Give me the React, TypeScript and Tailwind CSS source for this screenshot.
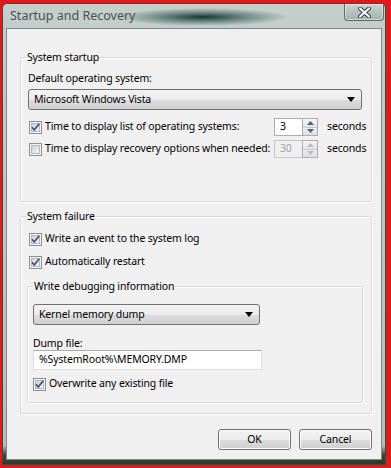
import React from "react";

const font = "font-['Noto_Sans','Open_Sans',sans-serif]";

const CheckBox = ({ checked }: { checked: boolean }) => (
  <svg width="13" height="13" viewBox="0 0 13 13" className="shrink-0">
    <defs>
      <linearGradient id="cbInner" x1="0" y1="0" x2="1" y2="1">
        <stop offset="0" stopColor="#cbcfd5" />
        <stop offset="1" stopColor="#f6f6f6" />
      </linearGradient>
    </defs>
    <rect x="0.5" y="0.5" width="12" height="12" fill="#f4f4f4" stroke="#8e8f8f" />
    <rect x="2.5" y="2.5" width="8" height="8" fill="url(#cbInner)" stroke="#b4b9c0" />
    {checked && (
      <path d="M3 6.2 L5.3 9 L10.2 2.8" fill="none" stroke="#3c4f85" strokeWidth="1.7" />
    )}
  </svg>
);

const Select = ({ value, className }: { value: string; className: string }) => (
  <div
    className={`${className} h-[21px] flex items-center justify-between pl-[5px] pr-[6px] rounded-[3px] border border-[#707070] bg-[linear-gradient(to_bottom,#f2f2f2_0%,#ebebeb_50%,#dddddd_51%,#cfcfcf_100%)]`}
  >
    <span>{value}</span>
    <svg width="8" height="5" viewBox="0 0 8 5">
      <path d="M0 0 H8 L4 5 Z" fill="#000" />
    </svg>
  </div>
);

const Spin = ({ value, disabled }: { value: string; disabled?: boolean }) => {
  const arrow = disabled ? "#b8bcc2" : "#4d6185";
  return (
    <div className="flex h-[18px] shrink-0">
      <div
        className={`w-[28px] h-full border border-r-0 flex items-center pl-[5px] ${
          disabled ? "bg-[#f0f0f0] text-[#a0a0a0] border-[#c4c6ca]" : "bg-white text-black border-[#abadb3]"
        }`}
      >
        {value}
      </div>
      <div className="w-[16px] h-full flex flex-col border border-[#abadb3] bg-[#e8eaec]">
        <div className="flex-1 flex items-center justify-center border-b border-[#c5c8cc] bg-[linear-gradient(to_bottom,#f4f5f6,#e2e4e7)]">
          <svg width="7" height="4" viewBox="0 0 7 4">
            <path d="M0 4 L3.5 0 L7 4 Z" fill={arrow} />
          </svg>
        </div>
        <div className="flex-1 flex items-center justify-center bg-[linear-gradient(to_bottom,#eceef0,#dcdfe2)]">
          <svg width="7" height="4" viewBox="0 0 7 4">
            <path d="M0 0 L7 0 L3.5 4 Z" fill={arrow} />
          </svg>
        </div>
      </div>
    </div>
  );
};

const Group = ({
  label,
  className,
  children,
}: {
  label: string;
  className: string;
  children: React.ReactNode;
}) => (
  <div
    className={`relative border border-[#d5d9dc] rounded-[2px] shadow-[1px_1px_0_#ffffff,inset_1px_1px_0_#ffffff] ${className}`}
  >
    <span className="absolute left-[5px] top-[-8px] px-[1px] bg-[#f0f0f0] leading-[15px]">{label}</span>
    {children}
  </div>
);

const Button = ({ label }: { label: string }) => (
  <button className="w-[73px] h-[21px] rounded-[3px] border border-[#707070] bg-[linear-gradient(to_bottom,#f2f2f2_0%,#ebebeb_50%,#dddddd_51%,#cfcfcf_100%)] shadow-[inset_0_0_0_1px_#fcfcfc] text-black">
    {label}
  </button>
);

export default function App() {
  return (
    <div className={`w-[391px] h-[468px] bg-[#e3181b] pl-[2px] pt-[3px] pr-[5px] pb-[3px] ${font} text-[10.5px] tracking-[-0.15px] text-black`}>
      <div className="w-full h-full flex flex-col border border-[#3e4a47] rounded-t-[5px] bg-[linear-gradient(to_bottom,#c4cecb_0%,#b2c0bc_96%,#3a4936_98%,#2d3a2a_100%)] px-[3px] pb-[4px]">
        <div className="h-[24px] flex justify-between items-start bg-[radial-gradient(ellipse_85px_9px_at_200px_13px,#123a31_0%,rgba(30,70,60,0.5)_50%,transparent_100%)] -mx-[3px] pl-[7px] pr-[1px]">
          <span className="leading-[24px] text-[12.5px] tracking-normal text-[#4a504f]">Startup and Recovery</span>
          <div className="w-[40px] h-[17px] rounded-b-[4px] border border-t-0 border-[#5d6b68] bg-[linear-gradient(to_bottom,#c9d3d1,#a3b2ae)] flex items-center justify-center shadow-[inset_0_0_0_1px_rgba(255,255,255,0.45)]">
            <svg width="13" height="11" viewBox="0 0 13 11">
              <path d="M2 1.5 L11 9.5 M11 1.5 L2 9.5" stroke="#2e3a38" strokeWidth="4" strokeLinecap="round" />
              <path d="M2 1.5 L11 9.5 M11 1.5 L2 9.5" stroke="#ffffff" strokeWidth="2.2" strokeLinecap="round" />
            </svg>
          </div>
        </div>
        <div className="flex-1 flex flex-col border border-[#7c8b88] bg-[#f0f0f0] pl-[13px] pr-[9px] pt-[28px]">
          <Group label="System startup" className="h-[145px] pl-[7px] pr-[9px] pt-[13px]">
            <div className="leading-[15px]">Default operating system:</div>
            <Select value="Microsoft Windows Vista" className="mt-[3px]" />
            <div className="mt-[8px] h-[18px] flex items-center">
              <span className="ml-[1px]"><CheckBox checked /></span>
              <span className="ml-[3px] w-[229px] shrink-0 whitespace-nowrap">Time to display list of operating systems:</span>
              <Spin value="3" />
              <span className="ml-[9px] whitespace-nowrap">seconds</span>
            </div>
            <div className="mt-[4px] h-[18px] flex items-center">
              <span className="ml-[1px]"><CheckBox checked={false} /></span>
              <span className="ml-[3px] w-[229px] shrink-0 whitespace-nowrap">Time to display recovery options when needed:</span>
              <Spin value="30" disabled />
              <span className="ml-[9px] whitespace-nowrap">seconds</span>
            </div>
          </Group>

          <Group label="System failure" className="mt-[14px] h-[198px] pt-[14px] pl-[8px]">
            <div className="h-[16px] flex items-center">
              <CheckBox checked />
              <span className="ml-[3px]">Write an event to the system log</span>
            </div>
            <div className="mt-[7px] h-[16px] flex items-center">
              <CheckBox checked />
              <span className="ml-[3px]">Automatically restart</span>
            </div>
            <Group label="Write debugging information" className="mt-[16px] -ml-[2px] mr-[8px] h-[117px] pl-[5px] pt-[17px]">
              <Select value="Kernel memory dump" className="w-[227px]" />
              <div className="mt-[11px] leading-[14px]">Dump file:</div>
              <div className="w-[229px] h-[20px] border border-[#dcdfe3] border-t-[#abadb3] bg-white flex items-center pl-[5px]">
                %SystemRoot%\MEMORY.DMP
              </div>
              <div className="mt-[6px] h-[16px] flex items-center">
                <CheckBox checked />
                <span className="ml-[3px]">Overwrite any existing file</span>
              </div>
            </Group>
          </Group>

          <div className="mt-[15px] flex justify-end gap-[8px]">
            <Button label="OK" />
            <Button label="Cancel" />
          </div>
        </div>
      </div>
    </div>
  );
}
